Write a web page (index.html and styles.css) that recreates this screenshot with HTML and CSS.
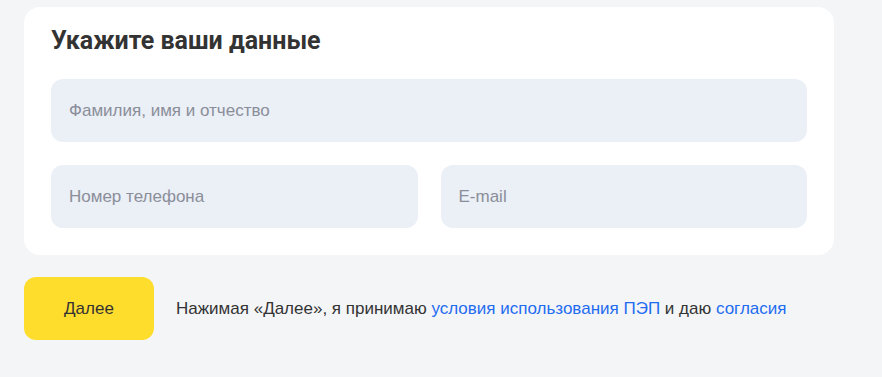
FILE: index.html
```html
<!DOCTYPE html>
<html lang="ru">
<head>
  <meta charset="UTF-8">
  <title>Укажите ваши данные</title>
  <link rel="stylesheet" href="styles.css">
</head>
<body>

<div class="page">
  <div class="card">
    <h2>Укажите ваши данные</h2>
    <div class="fields">
      <input class="field field-wide" type="text" placeholder="Фамилия, имя и отчество">
      <input class="field" type="tel" placeholder="Номер телефона">
      <input class="field" type="email" placeholder="E-mail">
    </div>
  </div>

  <div class="actions">
    <button class="btn-next">Далее</button>
    <p class="agree">Нажимая «Далее», я принимаю <a href="#">условия использования ПЭП</a> и даю <a href="#">согласия</a></p>
  </div>
</div>

</body>
</html>
```

FILE: styles.css
```css
body {
  margin: 0;
  background: #f4f5f7;
  font-family: 'Liberation Sans', Arial, sans-serif;
  color: #333;
}

.page {
  padding: 7px 48px 0 24px;
}

.card {
  background: #fff;
  border-radius: 16px;
  padding: 18px 27px 27px;
}

.card h2 {
  margin: 0;
  font-family: Roboto, 'Liberation Sans', sans-serif;
  font-size: 25px;
  font-weight: 700;
  line-height: 32px;
  color: #333;
}

.fields {
  display: grid;
  grid-template-columns: 1fr 1fr;
  gap: 23px 23px;
  margin-top: 22px;
}

.field {
  height: 63px;
  box-sizing: border-box;
  border: none;
  border-radius: 12px;
  background: #ebeff6;
  padding: 0 18px;
  font-family: inherit;
  font-size: 17px;
  color: #333;
  outline: none;
}

.field::placeholder {
  color: #8a8e99;
}

.field-wide {
  grid-column: span 2;
}

.actions {
  display: flex;
  align-items: center;
  gap: 22px;
  margin-top: 22px;
}

.btn-next {
  width: 130px;
  height: 63px;
  border: none;
  border-radius: 12px;
  background: #ffdd2d;
  font-family: inherit;
  font-size: 17px;
  color: #333;
  cursor: pointer;
}

.agree {
  margin: 0;
  font-size: 17px;
  color: #333;
}

.agree a {
  color: #1f6cf0;
  text-decoration: none;
}
```
